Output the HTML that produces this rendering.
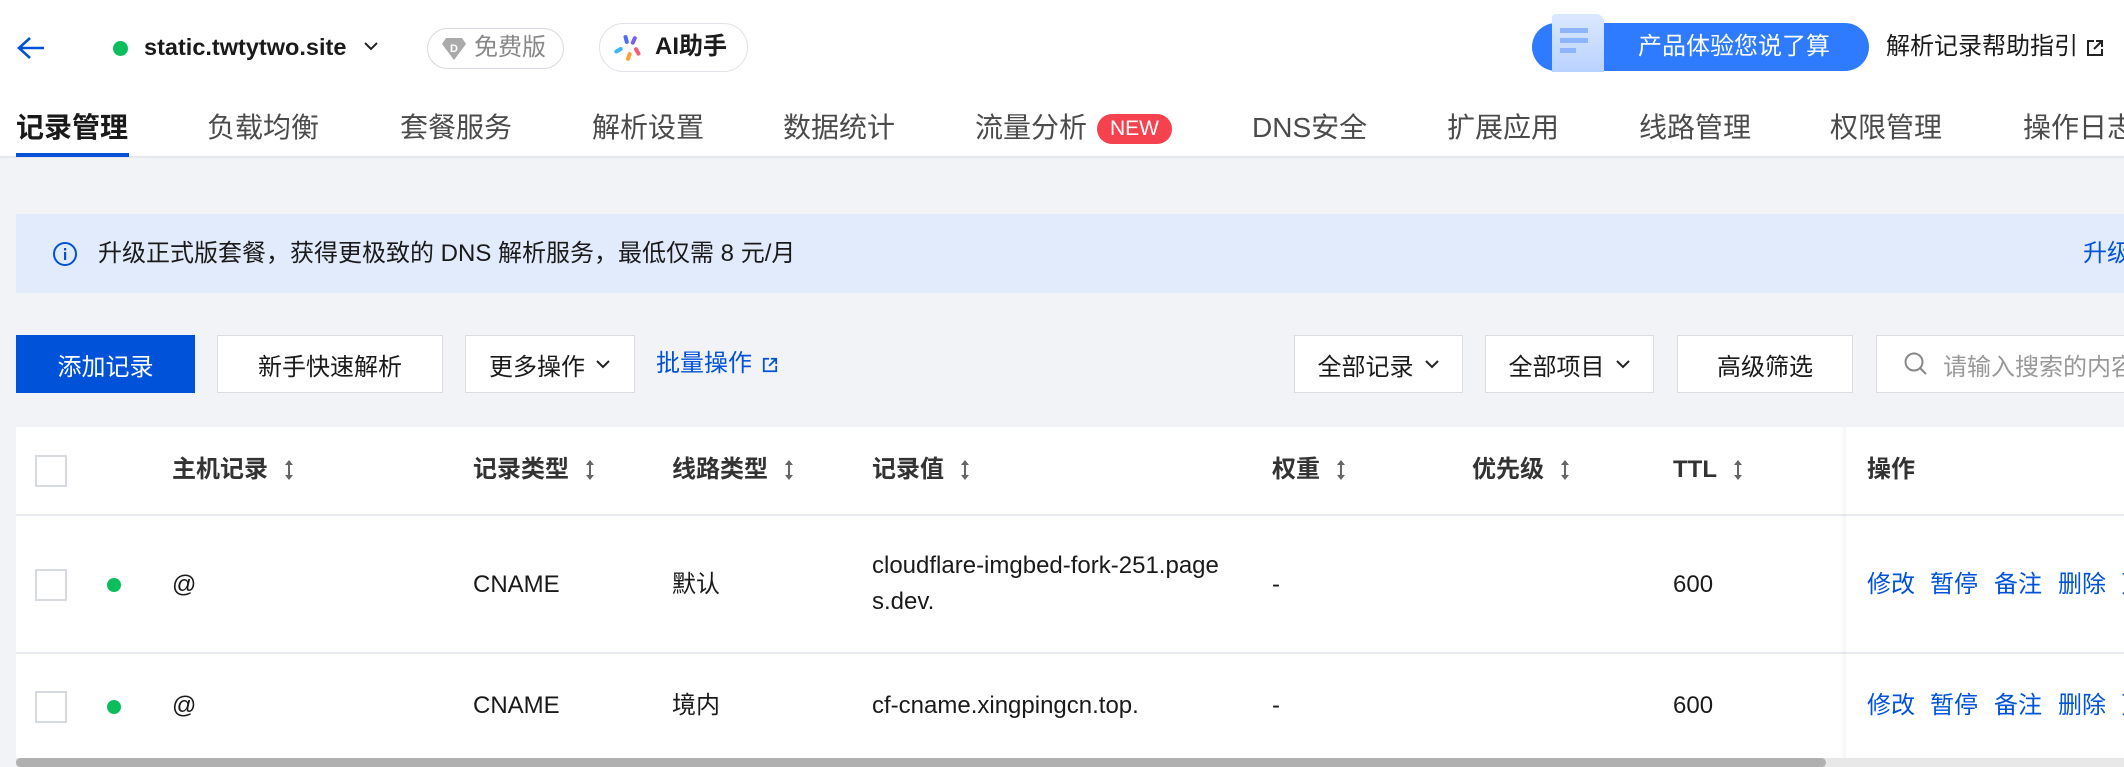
<!DOCTYPE html>
<html><head><meta charset="utf-8"><style>
*{margin:0;padding:0;box-sizing:border-box}
body{width:2124px;height:767px;overflow:hidden;background:#f2f3f7;font-family:"Liberation Sans","Noto Sans CJK SC",sans-serif;color:#1a1a1a;position:relative}
.a{position:absolute;white-space:nowrap}
.top{position:absolute;left:0;top:0;width:2124px;height:158px;background:#fff;border-bottom:2px solid #e5e7ec}
.tab{position:absolute;top:109px;font-size:28px;color:#4b4b4b;line-height:38px;white-space:nowrap}
.btn{position:absolute;top:335px;height:58px;background:#fff;border:1px solid #dcdcdc;font-size:24px;color:#1a1a1a;display:flex;align-items:center;justify-content:center;gap:10px;white-space:nowrap;overflow:hidden}
.th{position:absolute;top:454px;font-size:24px;font-weight:bold;color:#333;line-height:32px;white-space:nowrap;display:flex;align-items:center}
.srt{margin-left:16px}
.td{position:absolute;font-size:24px;color:#1a1a1a;line-height:32px;white-space:nowrap}
.cb{position:absolute;left:35px;width:32px;height:32px;border:2px solid #d6d9de;background:#fff}
.dot{position:absolute;left:107px;width:14px;height:14px;border-radius:50%;background:#0abf5b}
.op{position:absolute;font-size:24px;color:#0052d9;line-height:32px;white-space:nowrap}
</style></head><body>
<div class="top"></div>
<svg class="a" style="left:16px;top:35px" width="30" height="26" viewBox="0 0 30 26"><path d="M28 13H4M14 3L3 13l11 10" stroke="#0052d9" stroke-width="2.6" fill="none"/></svg>
<div class="a" style="left:113px;top:41px;width:15px;height:15px;border-radius:50%;background:#0abf5b"></div>
<div class="a" style="left:144px;top:31px;font-size:23.5px;font-weight:bold;line-height:32px">static.twtytwo.site</div>
<svg class="a" style="left:363px;top:40px" width="16" height="12"><path d="M2 3l6 6 6-6" stroke="#222" stroke-width="2" fill="none"/></svg>
<div class="a" style="left:427px;top:28px;width:137px;height:41px;border:1.5px solid #d6d9e0;border-radius:21px;font-size:24px;color:#888;line-height:38px;padding-left:46px">免费版</div>
<svg class="a" style="left:441px;top:36px" width="26" height="26" viewBox="0 0 26 26"><path d="M5 2h16l4 6-12 16L1 8z" fill="#aaa"/><text x="9" y="16" font-size="11" fill="#fff" font-weight="bold" font-family="Liberation Sans">D</text></svg>
<div class="a" style="left:599px;top:23px;width:149px;height:49px;border:1.5px solid #e0e3ea;border-radius:25px;font-size:24px;font-weight:bold;line-height:46px;padding-left:55px">AI助手</div>
<svg class="a" style="left:614px;top:33px" width="30" height="30" viewBox="0 0 30 30"><rect x="10" y="2" width="4" height="9" rx="2" fill="#4a6cf7" transform="rotate(-15 12 6)"/><rect x="18" y="3" width="4" height="9" rx="2" fill="#7b5cf5" transform="rotate(25 20 7)"/><rect x="21" y="14" width="4" height="9" rx="2" fill="#f55a7a" transform="rotate(-30 23 18)"/><rect x="13" y="19" width="4" height="9" rx="2" fill="#f7a23b" transform="rotate(20 15 23)"/><rect x="3" y="13" width="4" height="9" rx="2" fill="#3bb5f7" transform="rotate(60 5 17)"/></svg>
<div class="a" style="left:1532px;top:23px;width:337px;height:48px;background:#2f7bff;border-radius:24px;color:#fff;font-size:24px;line-height:48px;padding-left:106px">产品体验您说了算</div>
<div class="a" style="left:1552px;top:14px;width:52px;height:58px;background:linear-gradient(#dbe8ff,#b9d2ff);border-radius:4px 8px 0 0"></div>
<div class="a" style="left:1560px;top:28px;width:28px;height:5px;background:#8cb4ff"></div>
<div class="a" style="left:1560px;top:38px;width:28px;height:5px;background:#8cb4ff"></div>
<div class="a" style="left:1560px;top:48px;width:16px;height:5px;background:#8cb4ff"></div>
<div class="a" style="left:1886px;top:31px;font-size:24px;line-height:32px">解析记录帮助指引</div>
<svg class="a" style="left:2086px;top:39px" width="18" height="18" viewBox="0 0 18 18"><path d="M8 2H2v14h14v-6M10 2h6v6M16 2L8 10" stroke="#222" stroke-width="2" fill="none"/></svg>

<div class="tab" style="left:16px;color:#1a1a1a;font-weight:bold">记录管理</div>
<div class="a" style="left:16px;top:153px;width:113px;height:4px;background:#0052d9"></div>
<div class="tab" style="left:207px">负载均衡</div>
<div class="tab" style="left:400px">套餐服务</div>
<div class="tab" style="left:592px">解析设置</div>
<div class="tab" style="left:783px">数据统计</div>
<div class="tab" style="left:975px">流量分析</div>
<div class="a" style="left:1097px;top:114px;width:75px;height:30px;background:#f5424e;border-radius:15px;color:#fff;font-size:21px;line-height:30px;text-align:center">NEW</div>
<div class="tab" style="left:1252px">DNS安全</div>
<div class="tab" style="left:1447px">扩展应用</div>
<div class="tab" style="left:1639px">线路管理</div>
<div class="tab" style="left:1830px">权限管理</div>
<div class="tab" style="left:2023px">操作日志</div>

<div class="a" style="left:16px;top:214px;width:2108px;height:79px;background:#e2ebfc"></div>
<svg class="a" style="left:52px;top:241px" width="26" height="26" viewBox="0 0 26 26"><circle cx="13" cy="13" r="11" stroke="#0052d9" stroke-width="2" fill="none"/><rect x="12" y="11" width="2.2" height="8" fill="#0052d9"/><rect x="12" y="7" width="2.2" height="2.4" fill="#0052d9"/></svg>
<div class="a" style="left:98px;top:238px;font-size:24px;line-height:32px">升级正式版套餐，获得更极致的 DNS 解析服务，最低仅需 8 元/月</div>
<div class="a" style="left:2083px;top:238px;font-size:24px;line-height:32px;color:#0052d9">升级</div>

<div class="btn" style="left:16px;width:179px;background:#0052d9;border-color:#0052d9;color:#fff">添加记录</div>
<div class="btn" style="left:217px;width:226px">新手快速解析</div>
<div class="btn" style="left:465px;width:170px">更多操作 <svg width="16" height="10"><path d="M2 2l6 6 6-6" stroke="#222" stroke-width="2" fill="none"/></svg></div>
<div class="a" style="left:656px;top:348px;font-size:24px;line-height:32px;color:#0052d9">批量操作</div>
<svg class="a" style="left:762px;top:357px" width="16" height="16" viewBox="0 0 18 18"><path d="M8 2H2v14h14v-6M10 2h6v6M16 2L8 10" stroke="#0052d9" stroke-width="2" fill="none"/></svg>
<div class="btn" style="left:1294px;width:169px">全部记录 <svg width="16" height="10"><path d="M2 2l6 6 6-6" stroke="#222" stroke-width="2" fill="none"/></svg></div>
<div class="btn" style="left:1485px;width:169px">全部项目 <svg width="16" height="10"><path d="M2 2l6 6 6-6" stroke="#222" stroke-width="2" fill="none"/></svg></div>
<div class="btn" style="left:1677px;width:176px">高级筛选</div>
<div class="btn" style="left:1876px;width:260px;justify-content:flex-start;padding-left:26px;color:#999;gap:14px"><svg width="26" height="26" viewBox="0 0 26 26"><circle cx="11" cy="11" r="8.5" stroke="#888" stroke-width="2" fill="none"/><path d="M17 17l6 6" stroke="#888" stroke-width="2"/></svg>请输入搜索的内容</div>

<div class="a" style="left:16px;top:427px;width:2108px;height:332px;background:#fff"></div>
<div class="a" style="left:16px;top:514px;width:2108px;height:2px;background:#e7eaef"></div>
<div class="a" style="left:16px;top:652px;width:2108px;height:2px;background:#e7eaef"></div>
<div class="a" style="left:1840px;top:427px;width:6px;height:332px;background:linear-gradient(90deg,rgba(0,0,0,0),rgba(0,0,0,0.04))"></div>

<div class="cb" style="top:455px"></div>
<div class="th" style="left:172px">主机记录<svg class="srt" width="10" height="24" viewBox="0 0 10 24"><path d="M5 3v18" stroke="#666" stroke-width="2"/><path d="M1 7l4-5 4 5zM1 17l4 5 4-5z" fill="#666"/></svg></div>
<div class="th" style="left:473px">记录类型<svg class="srt" width="10" height="24" viewBox="0 0 10 24"><path d="M5 3v18" stroke="#666" stroke-width="2"/><path d="M1 7l4-5 4 5zM1 17l4 5 4-5z" fill="#666"/></svg></div>
<div class="th" style="left:672px">线路类型<svg class="srt" width="10" height="24" viewBox="0 0 10 24"><path d="M5 3v18" stroke="#666" stroke-width="2"/><path d="M1 7l4-5 4 5zM1 17l4 5 4-5z" fill="#666"/></svg></div>
<div class="th" style="left:872px">记录值<svg class="srt" width="10" height="24" viewBox="0 0 10 24"><path d="M5 3v18" stroke="#666" stroke-width="2"/><path d="M1 7l4-5 4 5zM1 17l4 5 4-5z" fill="#666"/></svg></div>
<div class="th" style="left:1272px">权重<svg class="srt" width="10" height="24" viewBox="0 0 10 24"><path d="M5 3v18" stroke="#666" stroke-width="2"/><path d="M1 7l4-5 4 5zM1 17l4 5 4-5z" fill="#666"/></svg></div>
<div class="th" style="left:1472px">优先级<svg class="srt" width="10" height="24" viewBox="0 0 10 24"><path d="M5 3v18" stroke="#666" stroke-width="2"/><path d="M1 7l4-5 4 5zM1 17l4 5 4-5z" fill="#666"/></svg></div>
<div class="th" style="left:1673px">TTL<svg class="srt" width="10" height="24" viewBox="0 0 10 24"><path d="M5 3v18" stroke="#666" stroke-width="2"/><path d="M1 7l4-5 4 5zM1 17l4 5 4-5z" fill="#666"/></svg></div>
<div class="th" style="left:1867px">操作</div>

<div class="cb" style="top:569px"></div>
<div class="dot" style="top:578px"></div>
<div class="td" style="left:172px;top:569px">@</div>
<div class="td" style="left:473px;top:569px">CNAME</div>
<div class="td" style="left:672px;top:569px">默认</div>
<div class="td" style="left:872px;top:550px">cloudflare-imgbed-fork-251.page</div>
<div class="td" style="left:872px;top:586px">s.dev.</div>
<div class="td" style="left:1272px;top:569px">-</div>
<div class="td" style="left:1673px;top:569px">600</div>
<div class="op" style="left:1867px;top:569px">修改</div><div class="op" style="left:1930px;top:569px">暂停</div><div class="op" style="left:1994px;top:569px">备注</div><div class="op" style="left:2058px;top:569px">删除</div><div class="op" style="left:2121px;top:569px">更</div>

<div class="cb" style="top:691px"></div>
<div class="dot" style="top:700px"></div>
<div class="td" style="left:172px;top:690px">@</div>
<div class="td" style="left:473px;top:690px">CNAME</div>
<div class="td" style="left:672px;top:690px">境内</div>
<div class="td" style="left:872px;top:690px">cf-cname.xingpingcn.top.</div>
<div class="td" style="left:1272px;top:690px">-</div>
<div class="td" style="left:1673px;top:690px">600</div>
<div class="op" style="left:1867px;top:690px">修改</div><div class="op" style="left:1930px;top:690px">暂停</div><div class="op" style="left:1994px;top:690px">备注</div><div class="op" style="left:2058px;top:690px">删除</div><div class="op" style="left:2121px;top:690px">更</div>

<div class="a" style="left:16px;top:758px;width:2108px;height:9px;background:#e8e8e8"></div>
<div class="a" style="left:16px;top:758px;width:1810px;height:9px;background:#b0b0b0;border-radius:5px"></div>
</body></html>
